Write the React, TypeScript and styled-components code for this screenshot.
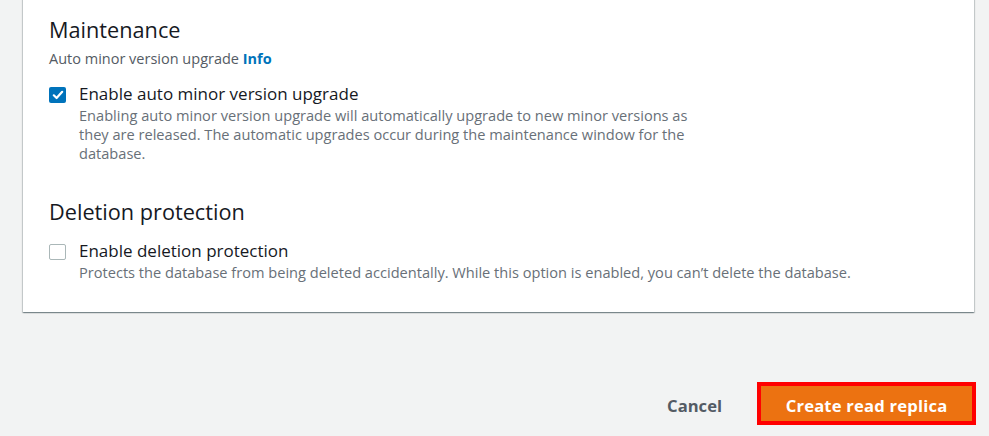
import React from "react";
import styled, { createGlobalStyle } from "styled-components";

const Global = createGlobalStyle`
  html, body { margin: 0; padding: 0; background: #f2f3f3; }
  body { font-family: "Open Sans", "Noto Sans", sans-serif; color: #16191f; }
  * { box-sizing: border-box; }
`;

const Page = styled.div`
  width: 989px;
  height: 436px;
  overflow: hidden;
  background: #f2f3f3;
  display: flex;
  flex-direction: column;
`;

const Panel = styled.section`
  margin: -20px 15px 0 23px;
  background: #fff;
  padding: 36px 26px 30px;
  box-shadow: 0 1px 1px 0 rgba(0, 28, 36, 0.3), 1px 1px 1px 0 rgba(0, 28, 36, 0.15),
    -1px 1px 1px 0 rgba(0, 28, 36, 0.15);
  display: flex;
  flex-direction: column;
`;

const Section = styled.div<{ $gap?: number }>`
  display: flex;
  flex-direction: column;
  margin-top: ${(p) => p.$gap ?? 0}px;
`;

const Heading = styled.h2`
  margin: 0;
  font-size: 21.7px;
  line-height: 28px;
  font-weight: 400;
  color: #16191f;
`;

const Label = styled.div`
  margin-top: 5px;
  font-size: 14.5px;
  line-height: 20px;
  color: #545b64;
`;

const Info = styled.a`
  color: #0073bb;
  font-weight: 700;
  text-decoration: none;
`;

const Option = styled.label<{ $top: number }>`
  display: flex;
  align-items: flex-start;
  gap: 13px;
  margin-top: ${(p) => p.$top}px;
  cursor: pointer;
`;

const Box = styled.span<{ $checked: boolean }>`
  flex: none;
  width: 17px;
  height: 16px;
  margin-top: 4px;
  border-radius: 2px;
  display: flex;
  align-items: center;
  justify-content: center;
  background: ${(p) => (p.$checked ? "#0073bb" : "#fff")};
  border: ${(p) => (p.$checked ? "none" : "1px solid #aab7b8")};
`;

const OptionText = styled.div`
  display: flex;
  flex-direction: column;
`;

const OptionTitle = styled.span`
  font-size: 17px;
  line-height: 22px;
  color: #16191f;
`;

const OptionDesc = styled.span<{ $width?: number }>`
  padding-top: 1px;
  font-size: 14.6px;
  line-height: 19px;
  color: #687078;
  max-width: ${(p) => (p.$width ? `${p.$width}px` : "none")};
`;

const Footer = styled.div`
  display: flex;
  justify-content: flex-end;
  align-items: center;
  margin-top: 70px;
  padding-right: 13px;
  gap: 15px;
`;

const CancelButton = styled.button`
  border: none;
  background: transparent;
  font-family: inherit;
  font-size: 16.6px;
  font-weight: 700;
  color: #545b64;
  padding: 11px 20px 8px;
  cursor: pointer;
`;

const PrimaryButton = styled.button`
  width: 219px;
  height: 43px;
  border: 4px solid #ff0000;
  padding: 3px 0 0;
  background: #ec7211;
  color: #fff;
  font-family: inherit;
  font-size: 16.6px;
  font-weight: 700;
  letter-spacing: 0.2px;
  cursor: pointer;
`;

const Check = () => (
  <svg width="12" height="12" viewBox="0 0 12 12">
    <path d="M1.8 6.3 L4.6 9 L10.2 2.8" fill="none" stroke="#fff" strokeWidth="2.2" strokeLinecap="round" strokeLinejoin="round" />
  </svg>
);

export default function App() {
  return (
    <>
      <Global />
      <Page>
        <Panel>
          <Section>
            <Heading>Maintenance</Heading>
            <Label>
              Auto minor version upgrade <Info href="#">Info</Info>
            </Label>
            <Option $top={14}>
              <Box $checked>
                <Check />
              </Box>
              <OptionText>
                <OptionTitle>Enable auto minor version upgrade</OptionTitle>
                <OptionDesc $width={625}>
                  Enabling auto minor version upgrade will automatically upgrade to new minor versions as
                  they are released. The automatic upgrades occur during the maintenance window for the
                  database.
                </OptionDesc>
              </OptionText>
            </Option>
          </Section>
          <Section $gap={35}>
            <Heading>Deletion protection</Heading>
            <Option $top={14}>
              <Box $checked={false} />
              <OptionText>
                <OptionTitle>Enable deletion protection</OptionTitle>
                <OptionDesc>
                  Protects the database from being deleted accidentally. While this option is enabled, you can’t
                  delete the database.
                </OptionDesc>
              </OptionText>
            </Option>
          </Section>
        </Panel>
        <Footer>
          <CancelButton>Cancel</CancelButton>
          <PrimaryButton>Create read replica</PrimaryButton>
        </Footer>
      </Page>
    </>
  );
}
